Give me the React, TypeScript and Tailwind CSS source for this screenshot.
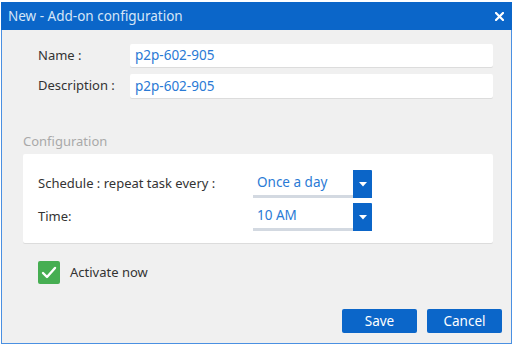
import React from "react";

function Caret() {
  return (
    <svg width="8" height="5" viewBox="0 0 8 5">
      <path d="M0 0 L8 0 L4 4.5 Z" fill="#ffffff" />
    </svg>
  );
}

function Select({ value }: { value: string }) {
  return (
    <div className="flex h-[28px] w-[119px]">
      <div className="flex-1 flex items-center pl-[4px] text-[13.5px] text-[#2a7ad5] border-b-[3px] border-[#d3d9e1]">
        {value}
      </div>
      <div className="w-[19px] bg-[#0b65c8] flex items-center justify-center rounded-tr-[1px]">
        <Caret />
      </div>
    </div>
  );
}

export default function App() {
  return (
    <div
      className="w-[516px] h-[349px] bg-white pt-[2px] pl-[1px]"
      style={{ fontFamily: '"Noto Sans", "Segoe UI", sans-serif' }}
    >
      <div className="w-[511px] h-[342px] bg-[#f0f0f0] border border-t-0 border-[#4a90e2] flex flex-col">
        <div className="h-[28px] bg-[#0b66c9] flex items-center justify-between pl-[7px] pr-[8px] -mx-px">
          <span className="text-[13.5px] text-[#d6e5f7]">New - Add-on configuration</span>
          <svg width="9" height="9" viewBox="0 0 9 9">
            <path d="M1 1 L8 8 M8 1 L1 8" stroke="#ffffff" strokeWidth="2.2" strokeLinecap="square" />
          </svg>
        </div>

        <div className="flex flex-col gap-[7px] pt-[14px] pl-[36px] pr-[18px]">
          <div className="flex items-center">
            <span className="w-[92px] text-[13px] text-[#333]">Name :</span>
            <div className="flex-1 h-[23px] bg-white rounded-[2px] shadow-[0_1px_0_#dcdcdc] flex items-center pl-[5px] text-[13.5px] text-[#2a7ad5]">
              p2p-602-905
            </div>
          </div>
          <div className="flex items-center">
            <span className="w-[92px] text-[13px] text-[#333]">Description :</span>
            <div className="flex-1 h-[24px] bg-white rounded-[2px] shadow-[0_1px_0_#dcdcdc] flex items-center pl-[5px] text-[13.5px] text-[#2a7ad5]">
              p2p-602-905
            </div>
          </div>
        </div>

        <div className="pl-[21px] pr-[18px] mt-[34px]">
          <div className="text-[13px] text-[#a9a9a9] leading-[18px]">Configuration</div>
          <div className="mt-[4px] bg-white rounded-[2px] shadow-[0_1px_0_#dcdcdc] h-[89px] pl-[15px] pt-[16px] flex flex-col gap-[5px]">
            <div className="flex items-center">
              <span className="w-[215px] text-[13px] text-[#333]">Schedule : repeat task every :</span>
              <Select value="Once a day" />
            </div>
            <div className="flex items-center">
              <span className="w-[215px] text-[13px] text-[#333]">Time:</span>
              <Select value="10 AM" />
            </div>
          </div>
        </div>

        <div className="flex items-center pl-[36px] mt-[18px]">
          <div className="w-[22px] h-[23px] bg-[#46ae52] rounded-[2px] flex items-center justify-center">
            <svg width="16" height="13" viewBox="0 0 16 13">
              <path d="M2 7 L6 11 L14 2" stroke="#ffffff" strokeWidth="2.4" fill="none" strokeLinecap="round" strokeLinejoin="round" />
            </svg>
          </div>
          <span className="ml-[10px] text-[13px] text-[#333]">Activate now</span>
        </div>

        <div className="flex justify-end gap-[10px] pr-[9px] mt-[25px]">
          <button className="w-[75px] h-[24px] bg-[#0b66c9] text-white text-[13.5px] rounded-[2px] flex items-center justify-center">
            Save
          </button>
          <button className="w-[75px] h-[24px] bg-[#0b66c9] text-white text-[13.5px] rounded-[2px] flex items-center justify-center">
            Cancel
          </button>
        </div>
      </div>
    </div>
  );
}
